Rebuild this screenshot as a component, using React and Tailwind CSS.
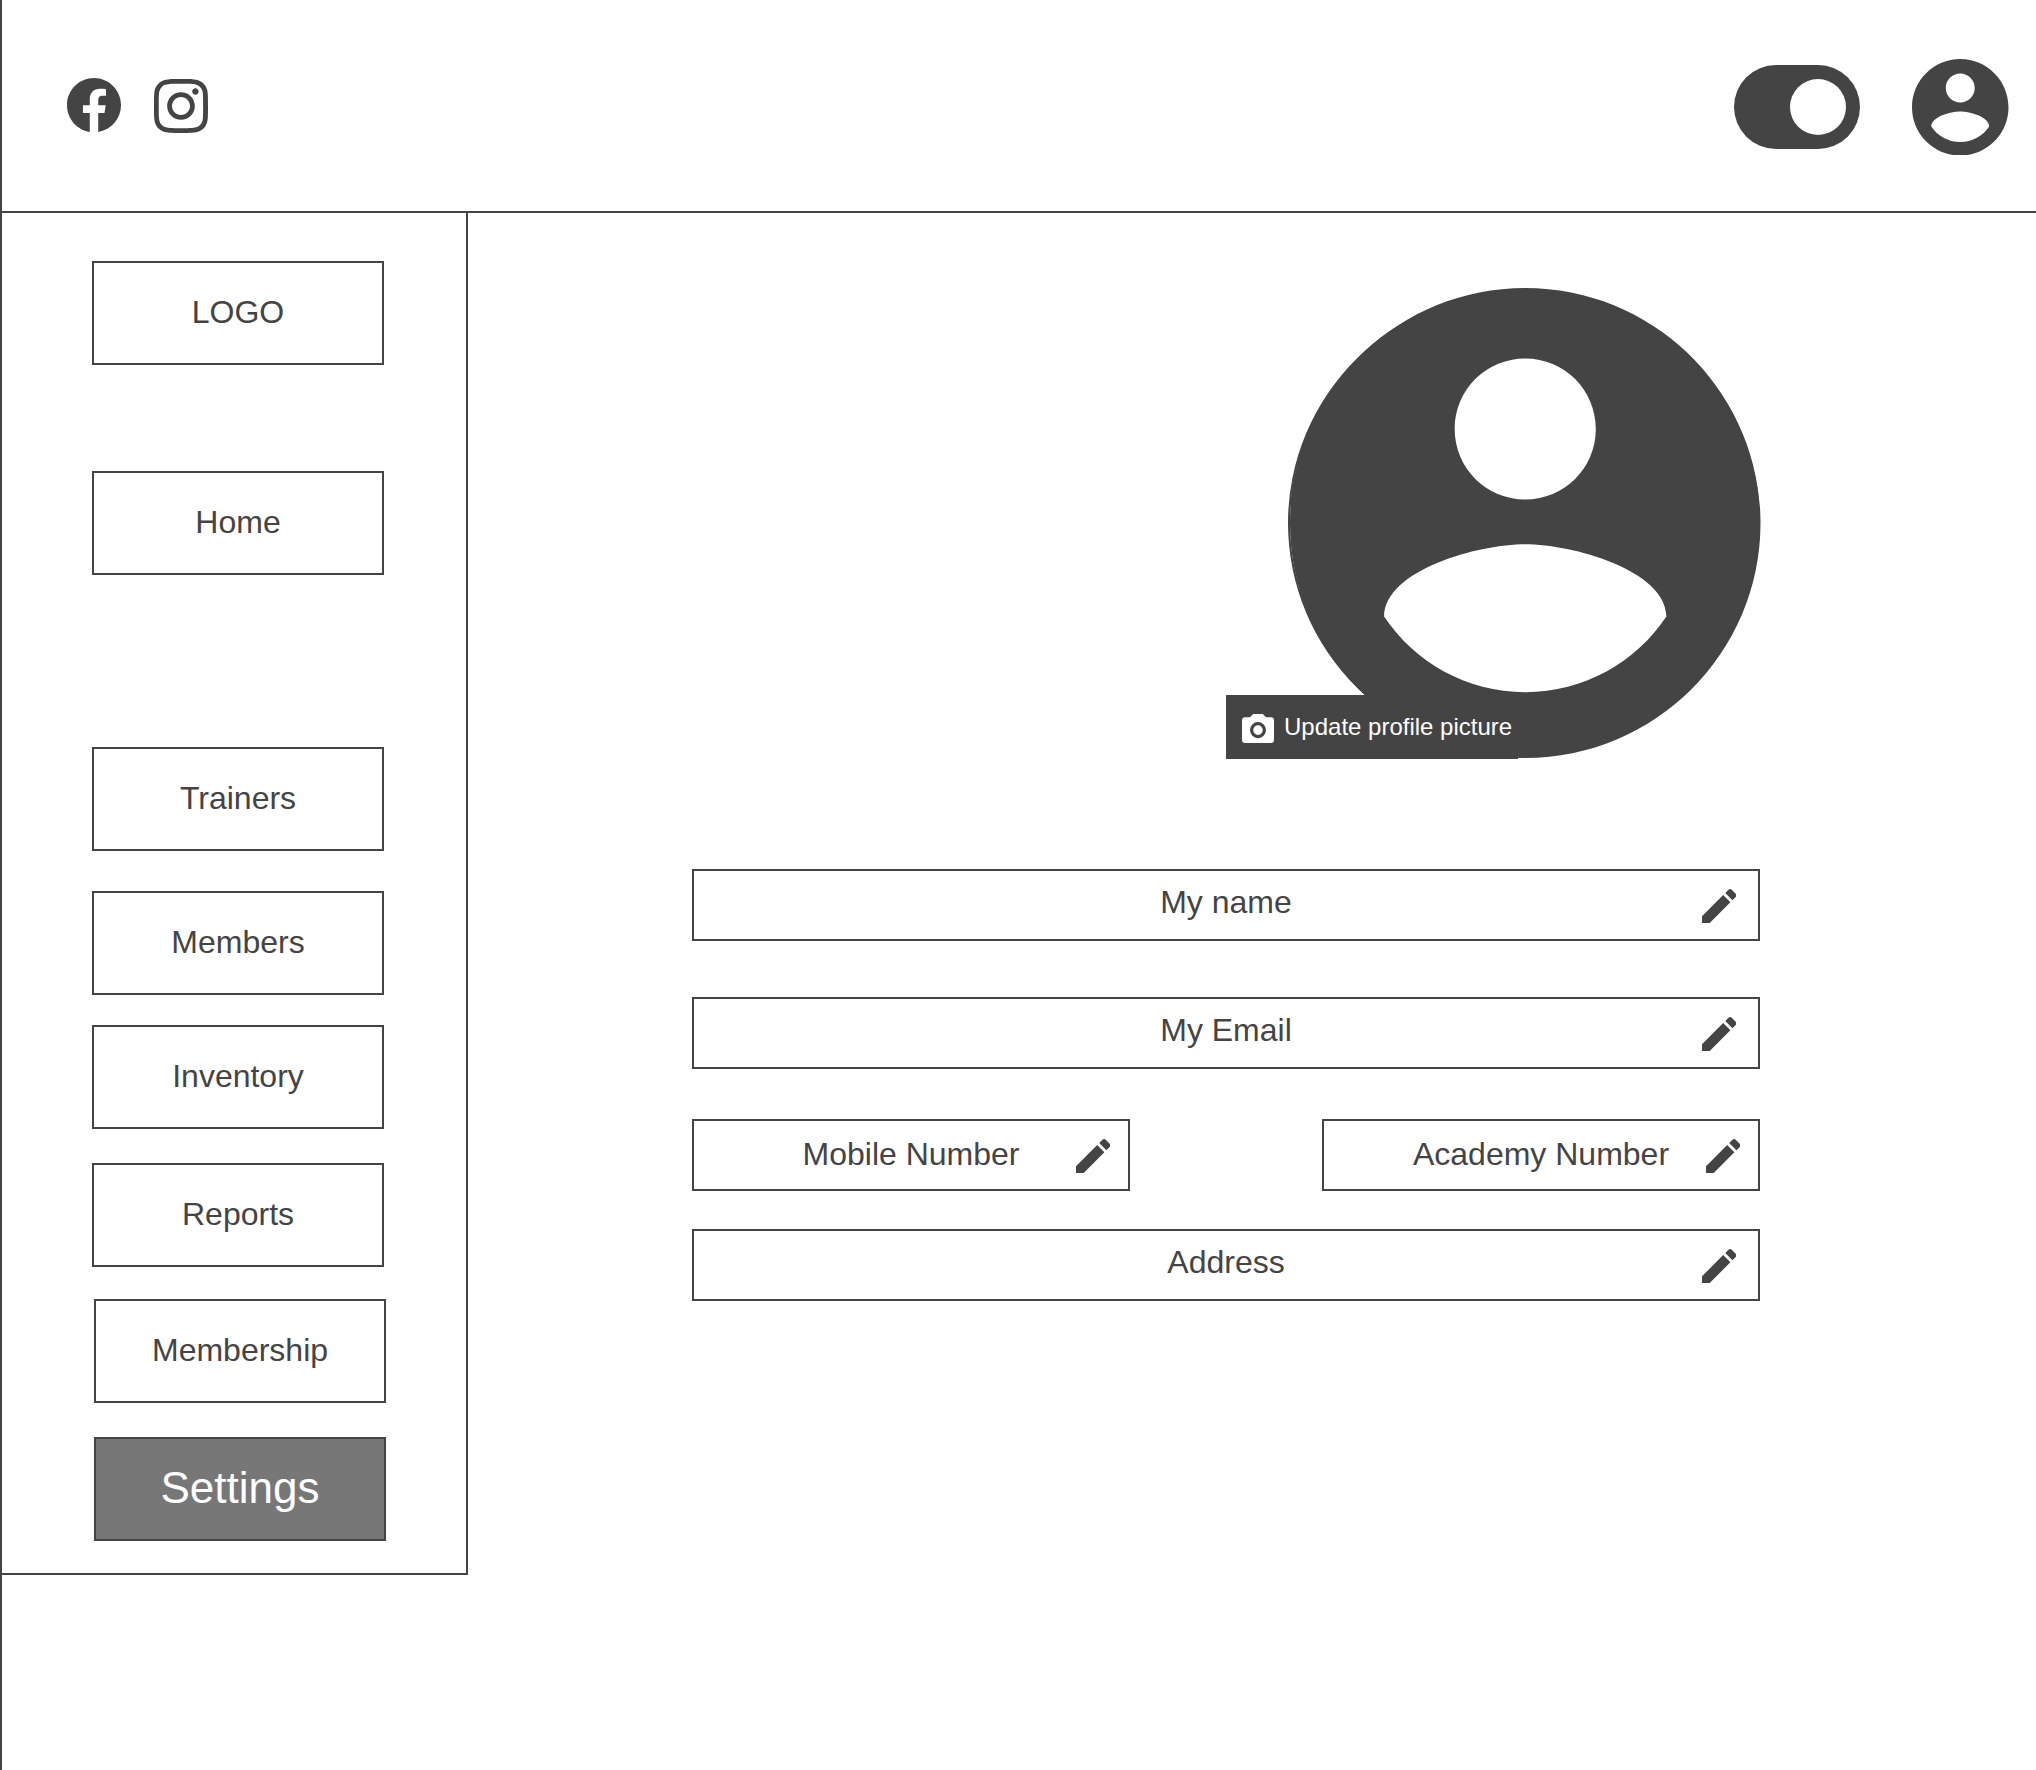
const PATHS = {
  facebook:
    "M12 2.04C6.5 2.04 2 6.53 2 12.06C2 17.06 5.66 21.21 10.44 21.96V14.96H7.9V12.06H10.44V9.85C10.44 7.34 11.93 5.96 14.22 5.96C15.31 5.96 16.45 6.15 16.45 6.15V8.62H15.19C13.95 8.62 13.56 9.39 13.56 10.18V12.06H16.34L15.89 14.96H13.56V21.96A10 10 0 0 0 22 12.06C22 6.53 17.5 2.04 12 2.04Z",
  instagram:
    "M12 0C8.74 0 8.333.015 7.053.072 5.775.132 4.905.333 4.14.63c-.789.306-1.459.717-2.126 1.384S.935 3.35.63 4.14C.333 4.905.131 5.775.072 7.053.012 8.333 0 8.74 0 12s.015 3.667.072 4.947c.06 1.277.261 2.148.558 2.913.306.788.717 1.459 1.384 2.126.667.666 1.336 1.079 2.126 1.384.766.296 1.636.499 2.913.558C8.333 23.988 8.74 24 12 24s3.667-.015 4.947-.072c1.277-.06 2.148-.262 2.913-.558.788-.306 1.459-.718 2.126-1.384.666-.667 1.079-1.335 1.384-2.126.296-.765.499-1.636.558-2.913.06-1.28.072-1.687.072-4.947s-.015-3.667-.072-4.947c-.06-1.277-.262-2.149-.558-2.913-.306-.789-.718-1.459-1.384-2.126C21.319 1.347 20.651.935 19.86.63c-.765-.297-1.636-.499-2.913-.558C15.667.012 15.26 0 12 0zm0 2.16c3.203 0 3.585.016 4.85.071 1.17.055 1.805.249 2.227.415.562.217.96.477 1.382.896.419.42.679.819.896 1.381.164.422.36 1.057.413 2.227.057 1.266.07 1.646.07 4.85s-.015 3.585-.074 4.85c-.061 1.17-.256 1.805-.421 2.227-.224.562-.479.96-.899 1.382-.419.419-.824.679-1.38.896-.42.164-1.065.36-2.235.413-1.274.057-1.649.07-4.859.07-3.211 0-3.586-.015-4.859-.074-1.171-.061-1.816-.256-2.236-.421-.569-.224-.96-.479-1.379-.899-.421-.419-.69-.824-.9-1.38-.165-.42-.359-1.065-.42-2.235-.045-1.26-.061-1.649-.061-4.844 0-3.196.016-3.586.061-4.861.061-1.17.255-1.814.42-2.234.21-.57.479-.96.9-1.381.419-.419.81-.689 1.379-.898.42-.166 1.051-.361 2.221-.421 1.275-.045 1.65-.06 4.859-.06l.045.03zm0 3.678c-3.405 0-6.162 2.76-6.162 6.162 0 3.405 2.76 6.162 6.162 6.162 3.405 0 6.162-2.76 6.162-6.162 0-3.405-2.76-6.162-6.162-6.162zM12 16c-2.21 0-4-1.79-4-4s1.79-4 4-4 4 1.79 4 4-1.79 4-4 4zm7.846-10.405c0 .795-.646 1.44-1.44 1.44-.795 0-1.44-.646-1.44-1.44 0-.794.646-1.439 1.44-1.439.793-.001 1.44.645 1.44 1.439z",
  account:
    "M12 2C6.48 2 2 6.48 2 12s4.48 10 10 10 10-4.48 10-10S17.52 2 12 2zm0 3c1.66 0 3 1.34 3 3s-1.34 3-3 3-3-1.34-3-3 1.34-3 3-3zm0 14.2c-2.5 0-4.71-1.28-6-3.22.03-1.99 4-3.08 6-3.08 1.99 0 5.97 1.09 6 3.08-1.29 1.94-3.5 3.22-6 3.22z",
  pencil:
    "M3 17.25V21h3.75L17.81 9.94l-3.75-3.75L3 17.25zM20.71 7.04c.39-.39.39-1.02 0-1.41l-2.34-2.34c-.39-.39-1.02-.39-1.41 0l-1.83 1.83 3.75 3.75 1.83-1.83z",
  camera:
    "M4 4H7L9 2H15L17 4H20A2 2 0 0 1 22 6V18A2 2 0 0 1 20 20H4A2 2 0 0 1 2 18V6A2 2 0 0 1 4 4M12 7A5 5 0 0 0 7 12A5 5 0 0 0 12 17A5 5 0 0 0 17 12A5 5 0 0 0 12 7M12 9A3 3 0 0 1 15 12A3 3 0 0 1 12 15A3 3 0 0 1 9 12A3 3 0 0 1 12 9Z",
};

function Icon({ name, viewBox, className }) {
  return (
    <svg viewBox={viewBox} preserveAspectRatio="none" fill="currentColor" className={className} aria-hidden="true">
      <path d={PATHS[name]} />
    </svg>
  );
}

function NavButton({ label, className = "" }) {
  return (
    <button
      className={`flex h-[104px] w-[292px] shrink-0 items-center justify-center border-2 border-[#444] pb-0.5 text-[32px] leading-9 ${className}`}
    >
      {label}
    </button>
  );
}

function Field({ label, className = "", textClass = "pb-1.5", iconClass = "right-[22px]" }) {
  return (
    <div className={`relative flex h-[72px] items-center justify-center border-2 border-[#444] ${className}`}>
      <span className={`text-[32px] leading-9 ${textClass}`}>{label}</span>
      <Icon name="pencil" viewBox="3 3 18 18" className={`absolute top-[17.5px] size-[34.5px] ${iconClass}`} />
    </div>
  );
}

function Header() {
  return (
    <header className="flex h-[213px] items-start justify-between border-b-2 border-[#444]">
      <div className="flex gap-[33px] pl-[65px] pt-[78px]">
        <Icon name="facebook" viewBox="2 2 20 20" className="size-[54px]" />
        <Icon name="instagram" viewBox="0 0 24 24" className="mt-px size-[54px]" />
      </div>
      <div className="flex gap-[52px] pr-[27.5px] pt-[58.5px]">
        <div className="mt-[6.5px] flex h-[84px] w-[126px] items-center justify-end rounded-full bg-[#444] pr-3.5">
          <div className="size-14 rounded-full bg-white" />
        </div>
        <Icon name="account" viewBox="2 2 20 20" className="size-[96.5px]" />
      </div>
    </header>
  );
}

function Sidebar() {
  return (
    <nav className="flex h-[1362px] w-[466px] flex-col border-b-2 border-r-2 border-[#444] pl-[90px] pt-12">
      <NavButton label="LOGO" />
      <NavButton label="Home" className="mt-[106px]" />
      <NavButton label="Trainers" className="mt-[172px]" />
      <NavButton label="Members" className="mt-10" />
      <NavButton label="Inventory" className="mt-[30px]" />
      <NavButton label="Reports" className="mt-[34px]" />
      <NavButton label="Membership" className="ml-0.5 mt-8" />
      <NavButton label="Settings" className="ml-0.5 mt-[34px] bg-[#777] text-[44px] text-white" />
    </nav>
  );
}

function Profile() {
  return (
    <main className="ml-[224px] flex w-[1068px] flex-col pt-[75px]">
      <div className="relative flex h-[471px] justify-end">
        {/* thin outline ring around the avatar */}
        <div className="absolute right-0 top-0.5 h-[466px] w-[472px] rounded-[50%] border-2 border-[#444]" />
        <Icon name="account" viewBox="2 2 20 20" className="-mr-[0.5px] h-[470px] w-[470.5px] shrink-0" />
        <button className="absolute bottom-0 left-[534px] flex h-16 w-[292px] items-center bg-[#444] pl-4 text-2xl text-white">
          <Icon name="camera" viewBox="2 2 20 18" className="mt-0.5 h-[29px] w-8 shrink-0" />
          <span className="ml-[10px] whitespace-nowrap">Update profile picture</span>
        </button>
      </div>
      <Field label="My name" className="mt-[110px]" />
      <Field label="My Email" className="mt-14" />
      <div className="mt-[50px] flex justify-between">
        <Field label="Mobile Number" className="w-[438px]" textClass="pb-0.5" iconClass="right-[18px]" />
        <Field label="Academy Number" className="w-[438px]" textClass="pb-0.5" iconClass="right-[18px]" />
      </div>
      <Field label="Address" className="mt-[38px]" />
    </main>
  );
}

export default function App() {
  return (
    <div className="h-[1770px] w-[2036px] overflow-hidden border-l-2 border-[#444] bg-white font-['Liberation_Sans',Arial,sans-serif] text-[#444]">
      <Header />
      <div className="flex items-start">
        <Sidebar />
        <Profile />
      </div>
    </div>
  );
}
